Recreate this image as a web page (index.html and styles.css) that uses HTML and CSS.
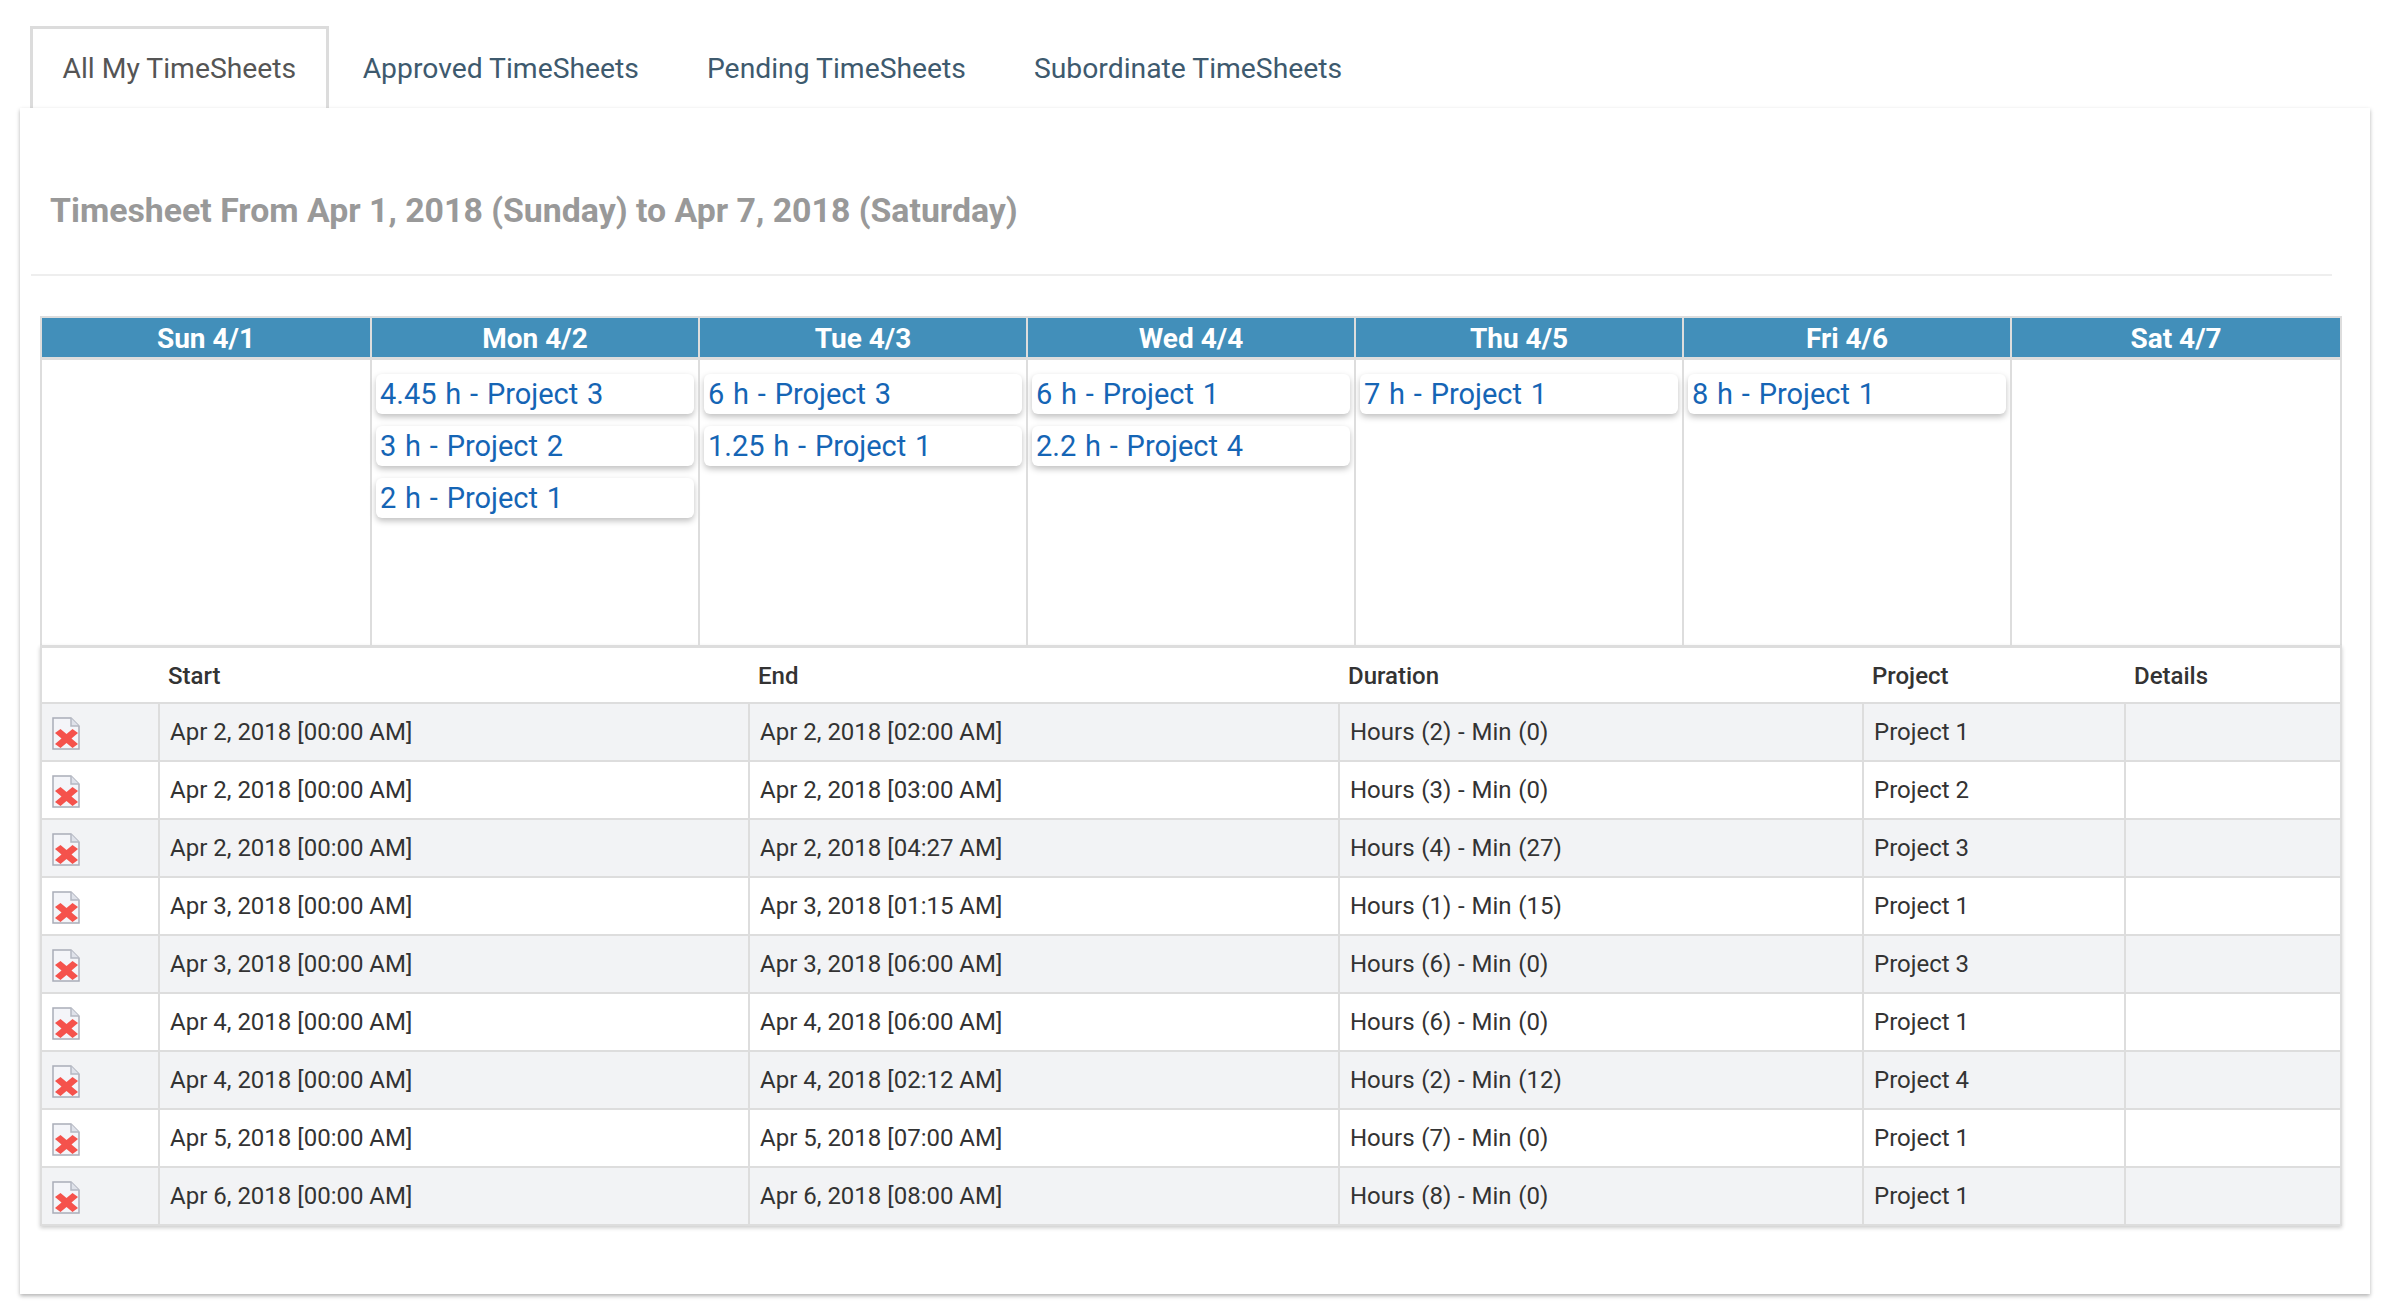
FILE: index.html
```html
<!DOCTYPE html>
<html lang="en">
<head>
    <meta charset="UTF-8">
    <meta name="viewport" content="width=device-width, initial-scale=1.0">
    <title>TimeSheets</title>
    <link rel="stylesheet" href="styles.css">
</head>
<body>

<svg class="sprite" width="0" height="0">
	<symbol id="broken-image" viewBox="0 0 28 33">
		<path d="M1 1H19L27 9V32H1Z" fill="#f4f5f9" stroke="#a9adb8" stroke-width="1.5"/>
		<path d="M19 1V9H27" fill="#dfe2ea" stroke="#b4b8c2" stroke-width="1.5"/>
		<path d="M3 16L8.500 12L14.500 17L20.500 12L26 16L19.500 21.500L26 27L20.500 31L14.500 26L8.500 31L3 27L9.500 21.500Z" fill="#f5524c"/>
	</symbol>
</svg>

<ul class="tabs">
	<li class="tab tab-active">All My TimeSheets</li>
	<li class="tab">Approved TimeSheets</li>
	<li class="tab">Pending TimeSheets</li>
	<li class="tab">Subordinate TimeSheets</li>
</ul>

<div class="panel">
	<h2 class="panel-title">Timesheet From Apr 1, 2018 (Sunday) to Apr 7, 2018 (Saturday)</h2>

	<div class="calendar">
		<div class="day-head">Sun 4/1</div>
		<div class="day-head">Mon 4/2</div>
		<div class="day-head">Tue 4/3</div>
		<div class="day-head">Wed 4/4</div>
		<div class="day-head">Thu 4/5</div>
		<div class="day-head">Fri 4/6</div>
		<div class="day-head">Sat 4/7</div>

		<div class="day"></div>
		<div class="day">
			<a class="event">4.45 h - Project 3</a>
			<a class="event">3 h - Project 2</a>
			<a class="event">2 h - Project 1</a>
		</div>
		<div class="day">
			<a class="event">6 h - Project 3</a>
			<a class="event">1.25 h - Project 1</a>
		</div>
		<div class="day">
			<a class="event">6 h - Project 1</a>
			<a class="event">2.2 h - Project 4</a>
		</div>
		<div class="day">
			<a class="event">7 h - Project 1</a>
		</div>
		<div class="day">
			<a class="event">8 h - Project 1</a>
		</div>
		<div class="day"></div>
	</div>

	<table class="entries">
		<colgroup>
			<col class="col-icon">
			<col class="col-start">
			<col class="col-end">
			<col class="col-duration">
			<col class="col-project">
			<col class="col-details">
		</colgroup>
		<thead>
			<tr>
				<th></th>
				<th>Start</th>
				<th>End</th>
				<th>Duration</th>
				<th>Project</th>
				<th>Details</th>
			</tr>
		</thead>
		<tbody>
			<tr>
				<td class="icon-cell"><svg class="delete-icon"><use href="#broken-image"/></svg></td>
				<td>Apr 2, 2018 [00:00 AM]</td>
				<td>Apr 2, 2018 [02:00 AM]</td>
				<td class="duration">Hours (2) - Min (0)</td>
				<td>Project 1</td>
				<td></td>
			</tr>
			<tr>
				<td class="icon-cell"><svg class="delete-icon"><use href="#broken-image"/></svg></td>
				<td>Apr 2, 2018 [00:00 AM]</td>
				<td>Apr 2, 2018 [03:00 AM]</td>
				<td class="duration">Hours (3) - Min (0)</td>
				<td>Project 2</td>
				<td></td>
			</tr>
			<tr>
				<td class="icon-cell"><svg class="delete-icon"><use href="#broken-image"/></svg></td>
				<td>Apr 2, 2018 [00:00 AM]</td>
				<td>Apr 2, 2018 [04:27 AM]</td>
				<td class="duration">Hours (4) - Min (27)</td>
				<td>Project 3</td>
				<td></td>
			</tr>
			<tr>
				<td class="icon-cell"><svg class="delete-icon"><use href="#broken-image"/></svg></td>
				<td>Apr 3, 2018 [00:00 AM]</td>
				<td>Apr 3, 2018 [01:15 AM]</td>
				<td class="duration">Hours (1) - Min (15)</td>
				<td>Project 1</td>
				<td></td>
			</tr>
			<tr>
				<td class="icon-cell"><svg class="delete-icon"><use href="#broken-image"/></svg></td>
				<td>Apr 3, 2018 [00:00 AM]</td>
				<td>Apr 3, 2018 [06:00 AM]</td>
				<td class="duration">Hours (6) - Min (0)</td>
				<td>Project 3</td>
				<td></td>
			</tr>
			<tr>
				<td class="icon-cell"><svg class="delete-icon"><use href="#broken-image"/></svg></td>
				<td>Apr 4, 2018 [00:00 AM]</td>
				<td>Apr 4, 2018 [06:00 AM]</td>
				<td class="duration">Hours (6) - Min (0)</td>
				<td>Project 1</td>
				<td></td>
			</tr>
			<tr>
				<td class="icon-cell"><svg class="delete-icon"><use href="#broken-image"/></svg></td>
				<td>Apr 4, 2018 [00:00 AM]</td>
				<td>Apr 4, 2018 [02:12 AM]</td>
				<td class="duration">Hours (2) - Min (12)</td>
				<td>Project 4</td>
				<td></td>
			</tr>
			<tr>
				<td class="icon-cell"><svg class="delete-icon"><use href="#broken-image"/></svg></td>
				<td>Apr 5, 2018 [00:00 AM]</td>
				<td>Apr 5, 2018 [07:00 AM]</td>
				<td class="duration">Hours (7) - Min (0)</td>
				<td>Project 1</td>
				<td></td>
			</tr>
			<tr>
				<td class="icon-cell"><svg class="delete-icon"><use href="#broken-image"/></svg></td>
				<td>Apr 6, 2018 [00:00 AM]</td>
				<td>Apr 6, 2018 [08:00 AM]</td>
				<td class="duration">Hours (8) - Min (0)</td>
				<td>Project 1</td>
				<td></td>
			</tr>
		</tbody>
	</table>
</div>

</body>
</html>
```

FILE: styles.css
```css
*{
	padding: 0;
	margin: 0;
	box-sizing: border-box;
}

body{
	font-family: Roboto, "Liberation Sans", sans-serif;
	background-color: white;
	padding: 26px 20px 22px;
}

.sprite{
	display: block;
	height: 0;
}

.tabs{
	display: flex;
	list-style: none;
	padding-left: 10px;
	height: 82px;
}

.tab{
	padding: 0 31px;
	border: 3px solid transparent;
	border-bottom: none;
	font-size: 28.3px;
	line-height: 80px;
	color: #3e5a6e;
}

.tab-active{
	padding: 0 29.5px;
	border-color: #dcdcdc;
	color: #555;
}

.panel{
	position: relative;
	height: 1186px;
	padding: 0 28px 0 20px;
	background-color: white;
	box-shadow: 0 2px 4px rgba(0, 0, 0, 0.3);
}

.panel-title{
	margin: 0 10px 0 -9px;
	padding: 0 0 0 19px;
	height: 168px;
	border-bottom: 2px solid #eee;
	font-size: 33.85px;
	font-weight: 700;
	line-height: 206px;
	color: #999;
}

.calendar{
	display: grid;
	grid-template-columns: repeat(6, 328px) 1fr;
	margin-top: 40px;
	border: solid #ddd;
	border-width: 2px 2px 0 2px;
}

.day-head{
	height: 42px;
	background-color: #428fba;
	border-left: 2px solid #ddd;
	border-bottom: 3px solid #ddd;
	text-align: center;
	font-size: 28px;
	font-weight: 700;
	line-height: 41px;
	color: white;
}

.day-head:nth-child(1),
.day:nth-child(8){
	border-left: none;
}

.day{
	display: flex;
	flex-direction: column;
	gap: 12px;
	height: 285px;
	padding: 14px 4px 0;
	border-left: 2px solid #ddd;
}

.event{
	height: 40px;
	padding-left: 4px;
	background-color: white;
	border-radius: 6px;
	box-shadow: 0 3px 6px rgba(0, 0, 0, 0.25);
	font-size: 29px;
	word-spacing: 1.6px;
	line-height: 41px;
	color: #1565b5;
}

.entries{
	width: 100%;
	table-layout: fixed;
	border-collapse: collapse;
	border: 2px solid #ddd;
	border-top: 3px solid #ddd;
	box-shadow: 0 2px 4px rgba(0, 0, 0, 0.2);
	font-size: 24px;
	color: #333;
}

.col-icon{ width: 118px; }
.col-start{ width: 590px; }
.col-end{ width: 590px; }
.col-duration{ width: 524px; }
.col-project{ width: 262px; }

.entries th{
	height: 56px;
	padding: 2px 0 0 9px;
	text-align: left;
	font-weight: 500;
	color: #333;
	border-bottom: 2px solid #ddd;
}

.entries td{
	height: 58px;
	padding-left: 10px;
	border: 2px solid #ddd;
}

.entries td.duration{
	word-spacing: 0.8px;
}

.entries tbody tr:nth-child(odd){
	background-color: #f2f3f5;
}

.entries td.icon-cell{
	padding-left: 10px;
}

.delete-icon{
	display: block;
	width: 28px;
	height: 33px;
	margin-top: 3px;
	filter: blur(0.7px);
}
```
